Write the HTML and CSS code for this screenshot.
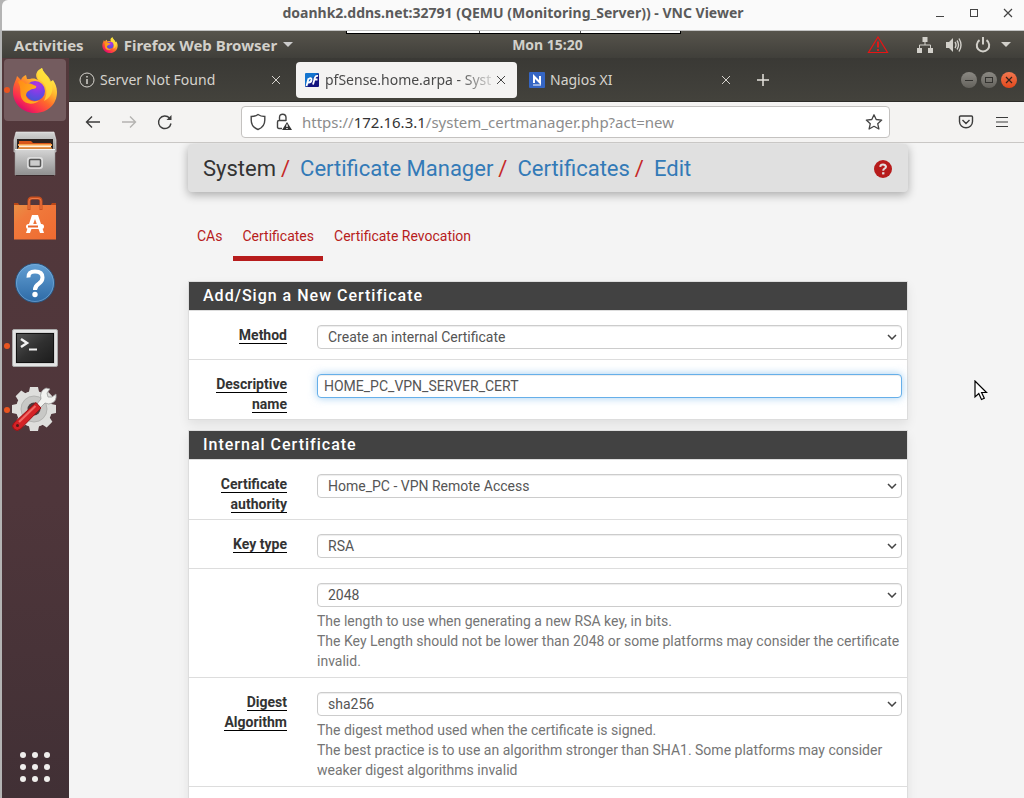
FILE: index.html
```html
<!DOCTYPE html>
<html lang="en">
<head>
<meta charset="utf-8">
<meta name="viewport" content="width=device-width, initial-scale=1">
<title>pfSense.home.arpa - System: Certificate Manager: Certificates: Edit</title>
<link rel="stylesheet" href="styles.css">
</head>
<body>
<svg width="0" height="0" class="defs" aria-hidden="true">
  <defs>
    <linearGradient id="fxOuter" x1="0.8" y1="0.1" x2="0.2" y2="0.95">
      <stop offset="0" stop-color="#fff44f"/><stop offset="0.3" stop-color="#ffb82e"/><stop offset="0.55" stop-color="#ff6a2b"/><stop offset="0.8" stop-color="#fb2f4e"/><stop offset="1" stop-color="#d6076f"/>
    </linearGradient>
    <radialGradient id="fxGlobe" cx="0.6" cy="0.2" r="0.9">
      <stop offset="0" stop-color="#b833e1"/><stop offset="0.5" stop-color="#7542e5"/><stop offset="1" stop-color="#3a5bd0"/>
    </radialGradient>
    <linearGradient id="fxHead" x1="0" y1="0" x2="1" y2="0.3">
      <stop offset="0" stop-color="#ff8a16"/><stop offset="1" stop-color="#ffb21e"/>
    </linearGradient>
    <linearGradient id="silver" x1="0" y1="0" x2="0" y2="1"><stop offset="0" stop-color="#d6d6d6"/><stop offset="1" stop-color="#909090"/></linearGradient>
    <linearGradient id="bag" x1="0" y1="0" x2="1" y2="1"><stop offset="0" stop-color="#e89046"/><stop offset="0.3" stop-color="#f07a3c"/><stop offset="1" stop-color="#ee6a30"/></linearGradient>
    <linearGradient id="help" x1="0" y1="0" x2="0" y2="1"><stop offset="0" stop-color="#639fd3"/><stop offset="1" stop-color="#2d6aa6"/></linearGradient>
    <linearGradient id="term" x1="0" y1="0" x2="1" y2="1"><stop offset="0" stop-color="#555"/><stop offset="0.5" stop-color="#303030"/><stop offset="1" stop-color="#1c1c1c"/></linearGradient>
    <linearGradient id="pf" x1="0" y1="0" x2="1" y2="1"><stop offset="0.4" stop-color="#1475cf"/><stop offset="0.6" stop-color="#14147e"/></linearGradient>
    <symbol id="firefox" viewBox="0 0 46 46">
      <path d="M1 24C1 17 4 14 5 9L9 13C10 10 12 9 14 8L15 12H18C22 11 24 12 26 13C22 8 25 3 30 1C31 5 34 7 36 10C37 12 38 13 38 15L41 13C43 16 45 20 45 25C45 37 36 46 23 46C10 46 1 36 1 25Z" fill="url(#fxOuter)"/>
      <path d="M26 12C25 7 27 3 30 1C31 6 38 9 40 17C42 25 38 31 32 34C37 24 34 16 26 12Z" fill="#ffdf38" opacity=".75"/>
      <circle cx="23" cy="24" r="10" fill="url(#fxGlobe)"/>
      <path d="M6 15C8 12 12 15 14 17C17 15 21 18 24 19C25 21 23 22 20 22C16 24 14 25 14 29C16 34 22 36 28 33C23 38 13 38 10 32C7 27 10 21 6 15Z" fill="url(#fxHead)"/>
    </symbol>
  </defs>
</svg>

<div class="viewer">
  <header class="viewer-title">
    <h1 class="viewer-name">doanhk2.ddns.net:32791 (QEMU (Monitoring_Server)) - VNC Viewer</h1>
    <div class="viewer-controls">
      <button class="plain" aria-label="Minimize"><svg width="10" height="10"><path d="M1 8.5h8" stroke="#444" fill="none"/></svg></button>
      <button class="plain" aria-label="Maximize"><svg width="10" height="10"><rect x="1.5" y="1.5" width="7" height="7" stroke="#444" fill="none"/></svg></button>
      <button class="plain" aria-label="Close"><svg width="10" height="10"><path d="M1 1l8 8M9 1l-8 8" stroke="#444" fill="none" stroke-width="1.2"/></svg></button>
    </div>
  </header>

  <div class="desktop">
    <div class="viewer-handle" aria-hidden="true"><span></span><span></span><span></span></div>
    <div class="topbar">
      <div class="topbar-left">
        <button class="plain">Activities</button>
        <button class="plain app-menu"><svg width="16" height="16"><use href="#firefox"/></svg>Firefox Web Browser<svg width="10" height="6"><path d="M0 0h10l-5 5z" fill="#ccc"/></svg></button>
      </div>
      <time class="clock">Mon 15:20</time>
      <div class="topbar-right">
        <svg class="warn" width="22" height="18" viewBox="0 0 22 18"><path d="M11 1L20.500 16.500H1.500Z" fill="none" stroke="#e81414" stroke-width="1.200"/><path d="M11 5.500v6M11 13v2" stroke="#f01414" stroke-width="1.800"/></svg>
        <svg width="16" height="16" viewBox="0 0 16 16"><path d="M5.500 0h5v5h-5zM0 11h5v5H0zM11 11h5v5h-5z" fill="#d2d0ca"/><path d="M8 5v3M2.500 11V8h11v3" fill="none" stroke="#d2d0ca"/></svg>
        <svg width="16" height="16" viewBox="0 0 16 16"><path d="M0 5h3l4-4v14l-4-4H0z" fill="#d2d0ca"/><path d="M9 5q2 3 0 6M11 3.500q3 4.500 0 9M13 1.500q4 6.500 0 13" fill="none" stroke="#d2d0ca" stroke-width="1.400"/></svg>
        <svg width="16" height="16" viewBox="0 0 16 16"><path d="M4.500 3.200A6.200 6.200 0 1 0 11.500 3.200M8 0v7.500" fill="none" stroke="#d2d0ca" stroke-width="2"/></svg>
        <svg class="drop" width="10" height="6"><path d="M0 0h10l-5 5z" fill="#d2d0ca"/></svg>
      </div>
    </div>

    <div class="workspace">
      <nav class="dock" aria-label="Dock">
        <button class="dock-item running active" aria-label="Firefox"><svg width="46" height="46"><use href="#firefox"/></svg></button>
        <button class="dock-item" aria-label="Files">
          <svg width="44" height="46" viewBox="0 0 44 46"><path d="M3 1h38l2 8v12H1V9z" fill="url(#silver)" stroke="#eee" stroke-width=".6"/><path d="M4 8h36v11H4z" fill="#2b2321"/><path d="M6 10h12l2 2h18v7H6z" fill="#d8571a"/><path d="M5 13h34v2H5z" fill="#f5a14a"/><path d="M6 14.500h32v2H6z" fill="#fff3dd"/><path d="M5 16.500h34v3H5z" fill="#e5811f"/><path d="M2 18h40v26H2z" fill="url(#silver)" stroke="#999" stroke-width=".5"/><path d="M2 18.500h40" stroke="#f4f4f4"/><rect x="14" y="26" width="16" height="12" rx="3" fill="#ddd"/><rect x="16.500" y="28.500" width="11" height="7" rx="1" fill="#ccc" stroke="#555" stroke-width="1.500"/><path d="M3 44.500h38" stroke="#3a292b"/></svg>
        </button>
        <button class="dock-item" aria-label="Ubuntu Software">
          <svg width="44" height="44" viewBox="0 -1 44 44"><path d="M1 6h4l2 3H1zM37 9l2-3h4v3z" fill="#b94717"/><path d="M1 8h42v34.500H1z" fill="url(#bag)"/><path d="M16 13V4q0-3 3-3h6q3 0 3 3v9" fill="none" stroke="#c9501f" stroke-width="3"/><path d="M16 12V4q0-2.500 3-2.500h6q3 0 3 2.500v8" fill="none" stroke="#f07a48"/><path d="M19 18h6l6 18h-4l-5-14-5 14h-4z" fill="#fff"/><rect x="13" y="27" width="18" height="5" rx="2.500" fill="#fff"/><path d="M15 29.500h10" stroke="#e9662b" stroke-width="2"/></svg>
        </button>
        <button class="dock-item" aria-label="Help">
          <svg width="44" height="44" viewBox="0 -1 44 44"><circle cx="22" cy="22" r="19.500" fill="url(#help)" stroke="#2b547e"/><circle cx="22" cy="22" r="18.500" fill="none" stroke="#8bbce4" opacity=".5"/><path d="M15.500 16.500Q15 10.500 22 10.500 29.500 10.500 29.500 16.500 29.500 20 26 22.500 22 25 22 29" fill="none" stroke="#fff" stroke-width="4"/><circle cx="22" cy="33.500" r="2.700" fill="#fff"/></svg>
        </button>
        <button class="dock-item running" aria-label="Terminal">
          <svg width="46" height="44" viewBox="0 -4 46 44"><rect x=".5" y="1.500" width="45" height="37" rx="1.500" fill="#e4e4e4" stroke="#aaa"/><rect x="3.500" y="4.500" width="39" height="31" fill="#bcbcbc"/><rect x="4.500" y="5.500" width="37" height="29" fill="url(#term)" stroke="#111"/><path d="M9 11l6 4-6 4" fill="none" stroke="#f2f2f2" stroke-width="2.500"/><path d="M17 21.500h8" stroke="#f2f2f2" stroke-width="2"/></svg>
        </button>
        <button class="dock-item running" aria-label="Settings">
          <svg width="46" height="46" viewBox="1 2 46 46"><g fill="#dededc"><circle cx="23" cy="24" r="18"/><path id="tooth" d="M19 2h8l1.500 7h-11z"/><use href="#tooth" transform="rotate(45 23 24)"/><use href="#tooth" transform="rotate(90 23 24)"/><use href="#tooth" transform="rotate(135 23 24)"/><use href="#tooth" transform="rotate(180 23 24)"/><use href="#tooth" transform="rotate(225 23 24)"/><use href="#tooth" transform="rotate(270 23 24)"/><use href="#tooth" transform="rotate(315 23 24)"/></g><circle cx="23" cy="24" r="13" fill="#c8c8c6" stroke="#b4b4b2"/><circle cx="23" cy="24" r="6.500" fill="#4e3a3d"/><path d="M25 20L30 14Q28 6 35 3L39 4 36 8 37 12 41 12 45 9Q46 16 41 18 38 20 34 18L28 24Z" fill="#f2f2f0" stroke="#999" stroke-width=".8"/><path d="M25 17.500l5 5.500L9.500 44q-3.500 3-6.500 0t0-6z" fill="#d42226" stroke="#9c1014"/><path d="M24.500 21L8 37" stroke="#f06a66" stroke-width="2"/><circle cx="6.500" cy="40.500" r="1.500" fill="#521a1a"/></svg>
        </button>
        <button class="dock-item apps" aria-label="Show Applications">
          <svg width="30" height="30" viewBox="0 0 30 30" fill="#f0eeec"><circle cx="3" cy="3" r="3"/><circle cx="15" cy="3" r="3"/><circle cx="27" cy="3" r="3"/><circle cx="3" cy="15" r="3"/><circle cx="15" cy="15" r="3"/><circle cx="27" cy="15" r="3"/><circle cx="3" cy="27" r="3"/><circle cx="15" cy="27" r="3"/><circle cx="27" cy="27" r="3"/></svg>
        </button>
      </nav>

      <section class="browser">
        <div class="tabstrip">
          <div class="tab">
            <svg width="16" height="16" viewBox="0 0 16 16" fill="none" stroke="#d6d3cd"><circle cx="8" cy="8" r="7"/><path d="M8 7v5M8 4v1.500" stroke-width="1.500"/></svg>
            <span class="tab-name">Server Not Found</span>
            <button class="plain" aria-label="Close tab"><svg width="10" height="10"><path d="M1 1l8 8M9 1l-8 8" stroke="#d6d3cd"/></svg></button>
          </div>
          <div class="tab current">
            <svg width="16" height="16" viewBox="0 0 16 16"><rect x="1" y="1" width="14" height="14" rx="1" fill="url(#pf)"/><path d="M2.500 14L4.500 6.500M4.500 7q3.500-2 3 1t-4 2.500M9 12.500l2-7q.7-2 3-1.500M9.500 7.500h4" fill="none" stroke="#fff" stroke-width="1.800"/></svg>
            <span class="tab-name fade">pfSense.home.arpa - Syst</span>
            <button class="plain" aria-label="Close tab"><svg width="10" height="10"><path d="M1 1l8 8M9 1l-8 8" stroke="#444"/></svg></button>
          </div>
          <div class="tab">
            <svg width="16" height="16" viewBox="0 0 16 16"><rect width="16" height="16" rx="1" fill="#3566c4"/><path d="M5 11V4.500l6 6V4" fill="none" stroke="#fff" stroke-width="2"/><path d="M4 13h8" stroke="#fff"/></svg>
            <span class="tab-name">Nagios XI</span>
            <button class="plain" aria-label="Close tab"><svg width="10" height="10"><path d="M1 1l8 8M9 1l-8 8" stroke="#d6d3cd"/></svg></button>
          </div>
          <button class="plain new-tab" aria-label="New tab"><svg width="12" height="12"><path d="M6 0v12M0 6h12" stroke="#e6e3dd" stroke-width="1.500"/></svg></button>
          <div class="window-controls">
            <button class="round" aria-label="Minimize"><svg width="16" height="16"><path d="M4 8.500h8" stroke="#33322f"/></svg></button>
            <button class="round" aria-label="Maximize"><svg width="16" height="16"><rect x="4.500" y="5.500" width="7" height="5" fill="none" stroke="#33322f"/></svg></button>
            <button class="round close" aria-label="Close"><svg width="16" height="16"><path d="M5 5l6 6M11 5l-6 6" stroke="#33221c" stroke-width="1.200"/></svg></button>
          </div>
        </div>

        <div class="toolbar">
          <div class="nav-buttons">
            <button class="plain" aria-label="Back"><svg width="16" height="14" viewBox="0 0 16 14" fill="none" stroke="#3c3c3c" stroke-width="1.400"><path d="M15 7H1.500M7 1.500L1.500 7 7 12.500"/></svg></button>
            <button class="plain" aria-label="Forward"><svg width="16" height="14" viewBox="0 0 16 14" fill="none" stroke="#b4b3b1" stroke-width="1.400"><path d="M1 7h13.500M9 1.500L14.500 7 9 12.500"/></svg></button>
            <button class="plain" aria-label="Reload"><svg width="16" height="16" viewBox="0 0 16 16" fill="none" stroke="#3c3c3c" stroke-width="1.400"><path d="M14 9.500A6.300 6.300 0 1 1 12.500 4"/><path d="M14.500 1v5H9.500z" fill="#3c3c3c" stroke="none"/></svg></button>
          </div>
          <div class="urlbar">
            <svg width="16" height="18" viewBox="0 0 16 18" fill="none" stroke="#444" stroke-width="1.400"><path d="M8 1.500C6 3 3.500 3.500 1.200 3.500V7C1.200 12 4 15 8 16.500 12 15 14.800 12 14.800 7V3.500C12.500 3.500 10 3 8 1.500Z"/></svg>
            <svg width="16" height="18" viewBox="0 0 16 18" fill="none" stroke="#444" stroke-width="1.400"><path d="M6 15.500H3q-1.500 0-1.500-1.500V9Q1.500 7.500 3 7.500h7M3.500 7V4.500Q3.500 1.200 6.700 1.200T10 4.500V8"/><path d="M11 9l5 8H6z" fill="#333" stroke="none"/><path d="M11 11.500v2.500M11 15v1" stroke="#fff"/></svg>
            <span class="url" role="textbox" aria-label="Address" contenteditable="true" spellcheck="false">https://<b>172.16.3.1</b>/system_certmanager.php?act=new</span>
            <button class="plain" aria-label="Bookmark this page"><svg width="18" height="16" viewBox="0 0 18 16" fill="none" stroke="#444" stroke-width="1.300" stroke-linejoin="round"><path d="M9 .8l2.200 4.700 5.500.6-4 3.600 1.200 5.300L9 12.300 4.100 15l1.200-5.300-4-3.600 5.500-.6z"/></svg></button>
          </div>
          <div class="side-buttons">
            <button class="plain" aria-label="Pocket"><svg width="16" height="14" viewBox="0 0 16 14" fill="none" stroke="#3c3c3c" stroke-width="1.400"><path d="M2.500 1h11q1 0 1 1v4.500a6.500 6.200 0 0 1-13 0V2q0-1 1-1zM4.500 5L8 8.500 11.500 5"/></svg></button>
            <button class="plain" aria-label="Menu"><svg width="12" height="10" viewBox="0 0 12 10" stroke="#3c3c3c"><path d="M0 .5h12M0 5h12M0 9.500h12"/></svg></button>
          </div>
        </div>

        <main class="page">
          <div class="container">
            <header class="page-title">
              <h2 class="crumbs"><span>System</span><i>/</i><a href="#">Certificate Manager</a><i>/</i><a href="#">Certificates</a><i>/</i><a href="#">Edit</a></h2>
              <a class="help-link" href="#" aria-label="Help"><svg width="18" height="18" viewBox="0 0 18 18"><circle cx="9" cy="9" r="9" fill="#b71c1c"/><path d="M6.200 6.800Q6.500 4.500 9 4.500T12 6.800Q12 8 10.500 8.700 9.200 9.300 9.200 10.800" fill="none" stroke="#e4e0e0" stroke-width="2"/><path d="M8.100 12.200h2.300v2.200H8.100z" fill="#e4e0e0"/></svg></a>
            </header>

            <nav class="tabs">
              <a href="#">CAs</a>
              <a href="#" class="active">Certificates</a>
              <a href="#">Certificate Revocation</a>
            </nav>

            <form class="cert-form">
              <section class="panel">
                <h2 class="panel-heading">Add/Sign a New Certificate</h2>
                <div class="group">
                  <label class="name" for="method"><span>Method</span></label>
                  <div class="field"><select id="method"><option>Create an internal Certificate</option></select></div>
                </div>
                <div class="group">
                  <label class="name" for="descr"><span>Descriptive name</span></label>
                  <div class="field"><input class="focused" id="descr" type="text" value="HOME_PC_VPN_SERVER_CERT"></div>
                </div>
              </section>

              <section class="panel">
                <h2 class="panel-heading">Internal Certificate</h2>
                <div class="group">
                  <label class="name" for="ca"><span>Certificate authority</span></label>
                  <div class="field"><select id="ca"><option>Home_PC - VPN Remote Access</option></select></div>
                </div>
                <div class="group">
                  <label class="name" for="keytype"><span>Key type</span></label>
                  <div class="field"><select id="keytype"><option>RSA</option></select></div>
                </div>
                <div class="group">
                  <div class="name"></div>
                  <div class="field"><select id="keylen" aria-label="Key length"><option>2048</option></select>
                    <p class="hint">The length to use when generating a new RSA key, in bits.<br>The Key Length should not be lower than 2048 or some platforms may consider the certificate invalid.</p></div>
                </div>
                <div class="group">
                  <label class="name" for="digest"><span>Digest Algorithm</span></label>
                  <div class="field"><select id="digest"><option>sha256</option></select>
                    <p class="hint">The digest method used when the certificate is signed.<br>The best practice is to use an algorithm stronger than SHA1. Some platforms may consider weaker digest algorithms invalid</p></div>
                </div>
                <div class="group"></div>
              </section>
            </form>
          </div>
        </main>
      </section>
    </div>
  </div>
</div>
<svg class="pointer" width="14" height="21" viewBox="0 0 14 21" aria-hidden="true"><path d="M1 1v16l3.800-3.500L7.500 19.500l2.800-1.300-2.700-5.700H12.500z" fill="#fff" stroke="#000" stroke-width="1.200"/></svg>
</body>
</html>
```
FILE: styles.css
```css
* { box-sizing: border-box; }

body {
  margin: 0;
  font: 14px/20px Roboto, sans-serif;
  color: #333;
  background: #b4b4b4;
}

svg { display: block; flex: none; }
.defs { position: absolute; }
h1, h2, p { margin: 0; }
a { color: #337ab7; text-decoration: none; }

.plain {
  display: flex;
  align-items: center;
  padding: 0;
  border: 0;
  background: none;
  color: inherit;
  font: inherit;
}

/* Remote viewer window */
.viewer {
  display: flex;
  flex-direction: column;
  height: 100vh;
  margin-left: 2px;
  overflow: hidden;
  font-family: "Noto Sans", sans-serif;
}

.viewer-title {
  display: grid;
  grid-template-columns: 1fr auto 1fr;
  align-items: center;
  flex: none;
  height: 31px;
  padding: 0 11px 5px;
  background: #fafafa;
  border-bottom: 1px solid #c4c4c4;
  border-radius: 6px 0 0 0;
}

.viewer-name {
  grid-column: 2;
  color: #5a5a5a;
  font-size: 14px;
  font-weight: 700;
  line-height: 20px;
}

.viewer-controls {
  display: flex;
  justify-content: flex-end;
  gap: 24px;
}

.desktop {
  position: relative;
  display: flex;
  flex: 1;
  flex-direction: column;
  min-height: 0;
}

.viewer-handle {
  position: absolute;
  top: 0;
  left: 344px;
  display: grid;
  grid-template-columns: 132px 100px 99px;
  gap: 1px;
  height: 3px;
  border: solid #000;
  border-width: 0 1px 1px;
  background: #555;
}
.viewer-handle span { background: #fff; }

.topbar {
  display: grid;
  grid-template-columns: 1fr auto 1fr;
  align-items: center;
  flex: none;
  height: 27px;
  padding: 0 13px 0 12px;
  background: linear-gradient(#57544c, #403f3a);
  color: #d2d0ca;
  font-size: 14px;
  font-weight: 700;
}
.topbar-left { display: flex; gap: 18px; font-size: 15px; }
.app-menu { gap: 6px; }
.clock { padding-left: 70px; }
.topbar-right {
  display: flex;
  align-items: center;
  justify-content: flex-end;
  gap: 13px;
}
.warn { margin-right: 15px; }
.drop { margin-left: -3px; }

.workspace { display: flex; flex: 1; min-height: 0; }

/* Dock */
.dock {
  display: flex;
  flex: none;
  flex-direction: column;
  gap: 2px;
  width: 67px;
  padding: 1px 3px 0 2px;
  background: linear-gradient(#53383b, #4f363b 60%, #413035);
}
.dock-item {
  display: grid;
  grid-template-columns: 5px 1fr 5px;
  align-items: center;
  justify-items: center;
  height: 62px;
  padding: 0;
  border: 0;
  border-radius: 4px;
  background: none;
}
.dock-item svg { grid-column: 2; grid-row: 1; }
.dock-item.active { background: #745c5f; }
.dock-item.running::before {
  content: "";
  grid-row: 1;
  width: 6px;
  height: 6px;
  border-radius: 3px;
  background: #e95420;
}
.dock-item.apps { margin-top: auto; }

/* Browser */
.browser {
  display: flex;
  flex: 1;
  flex-direction: column;
  min-width: 0;
}
.tabstrip {
  display: flex;
  align-items: center;
  flex: none;
  height: 44px;
  padding: 0 7px 0 2px;
  border-bottom: 1px solid #2c2b28;
  background: linear-gradient(#3a3935, #43423c);
  color: #d6d3cd;
}
.tab {
  display: flex;
  align-items: center;
  gap: 5px;
  flex: 0 1 221px;
  min-width: 0;
  height: 36px;
  margin-right: 4px;
  padding: 0 11px 0 8px;
  border-radius: 4px;
}
.tab.current { background: #f4f3f2; color: #4a4a4a; }
.tab-name {
  flex: 1;
  min-width: 0;
  white-space: nowrap;
}
.tab-name.fade { mask-image: linear-gradient(90deg, #000 80%, #0003); }
.new-tab { margin-left: 11px; }
.window-controls { display: flex; gap: 4px; margin-left: auto; }
.round {
  display: block;
  padding: 0;
  border: 0;
  border-radius: 8px;
  background: linear-gradient(#8b8983, #64625c);
}
.round.close { background: linear-gradient(#f27850, #e2481c); }

.toolbar {
  display: flex;
  align-items: center;
  flex: none;
  height: 41px;
  padding: 0 16px;
  border-bottom: 1px solid #c9c7c5;
  background: #f4f3f2;
}
.nav-buttons { display: flex; gap: 20px; }
.urlbar {
  display: flex;
  align-items: center;
  gap: 10px;
  flex: 1;
  min-width: 0;
  height: 32px;
  margin: 0 68px;
  padding: 0 6px 0 8px;
  border: 1px solid #c4c2c0;
  border-radius: 4px;
  background: #fff;
}
.url { flex: 1; color: #8c8c8c; font-size: 15px; white-space: nowrap; }
.url b { color: #333; font-weight: 400; }
.side-buttons { display: flex; gap: 22px; }

/* Web page */
.page {
  flex: 1;
  min-height: 0;
  overflow: hidden;
  padding: 1px 116px 0 119px;
  background: #f4f4f4;
  font-family: Roboto, sans-serif;
}
.container { display: flex; flex-direction: column; height: 100%; }
.page-title {
  display: flex;
  align-items: center;
  justify-content: space-between;
  flex: none;
  height: 48px;
  padding: 2px 16px 0 15px;
  border-radius: 4px;
  background: #e0e0e0;
  box-shadow: 0 3px 10px #0000004d;
}
.crumbs {
  display: flex;
  font-size: 22px;
  font-weight: 400;
  line-height: 24px;
}
.crumbs i { padding: 0 10px 0 5px; color: #c62828; font-style: normal; }

.tabs {
  display: flex;
  flex: none;
  gap: 2px;
  margin: 26px 0 20px;
}
.tabs a {
  padding: 8px 9px 10px;
  border-bottom: 5px solid transparent;
  color: #b71c1c;
}
.tabs a.active { border-color: #b71c1c; }

.cert-form { display: flex; flex: 1; flex-direction: column; gap: 10px; min-height: 0; }
.panel {
  flex: none;
  border: 1px solid #ddd;
  background: #fff;
  box-shadow: 0 5px 10px #00000014;
}
.panel:last-child { flex: 1 0 auto; }
.panel-heading {
  padding: 4px 14px;
  background: #424242;
  color: #fff;
  font-size: 16px;
  font-weight: 500;
  line-height: 20px;
  letter-spacing: 1px;
}
.group {
  display: flex;
  gap: 30px;
  padding: 14px 5px 5px 0;
  border-top: 1px solid #ddd;
}
.name {
  flex: none;
  width: 98px;
  padding-left: 15px;
  font-weight: 700;
  text-align: right;
}
.name span { border-bottom: 1px solid #000; }
.field { flex: 1; min-width: 0; }
.field input,
.field select {
  display: block;
  width: 100%;
  height: 24px;
  margin-bottom: 5px;
  padding: 0 6px;
  border: 1px solid #ccc;
  border-radius: 4px;
  outline: 0;
  background-color: #fff;
  box-shadow: inset 0 1px 1px #00000013;
  color: #555;
  font: 14px/20px Roboto, sans-serif;
}
.field select {
  appearance: none;
  padding: 0 20px 0 10px;
  background-image: url("data:image/svg+xml,%3Csvg xmlns='http://www.w3.org/2000/svg' width='10' height='6'%3E%3Cpath d='M1 1l4 4 4-4' fill='none' stroke='%23444' stroke-width='1.5'/%3E%3C/svg%3E");
  background-repeat: no-repeat;
  background-position: right 4px center;
}
.field input.focused {
  border-color: #66afe9;
  box-shadow: inset 0 1px 1px #00000013, 0 0 8px #66afe999;
}
.hint { margin: -1px 0 1px; color: #757575; }

.pointer { position: absolute; left: 974px; top: 380px; }
```
